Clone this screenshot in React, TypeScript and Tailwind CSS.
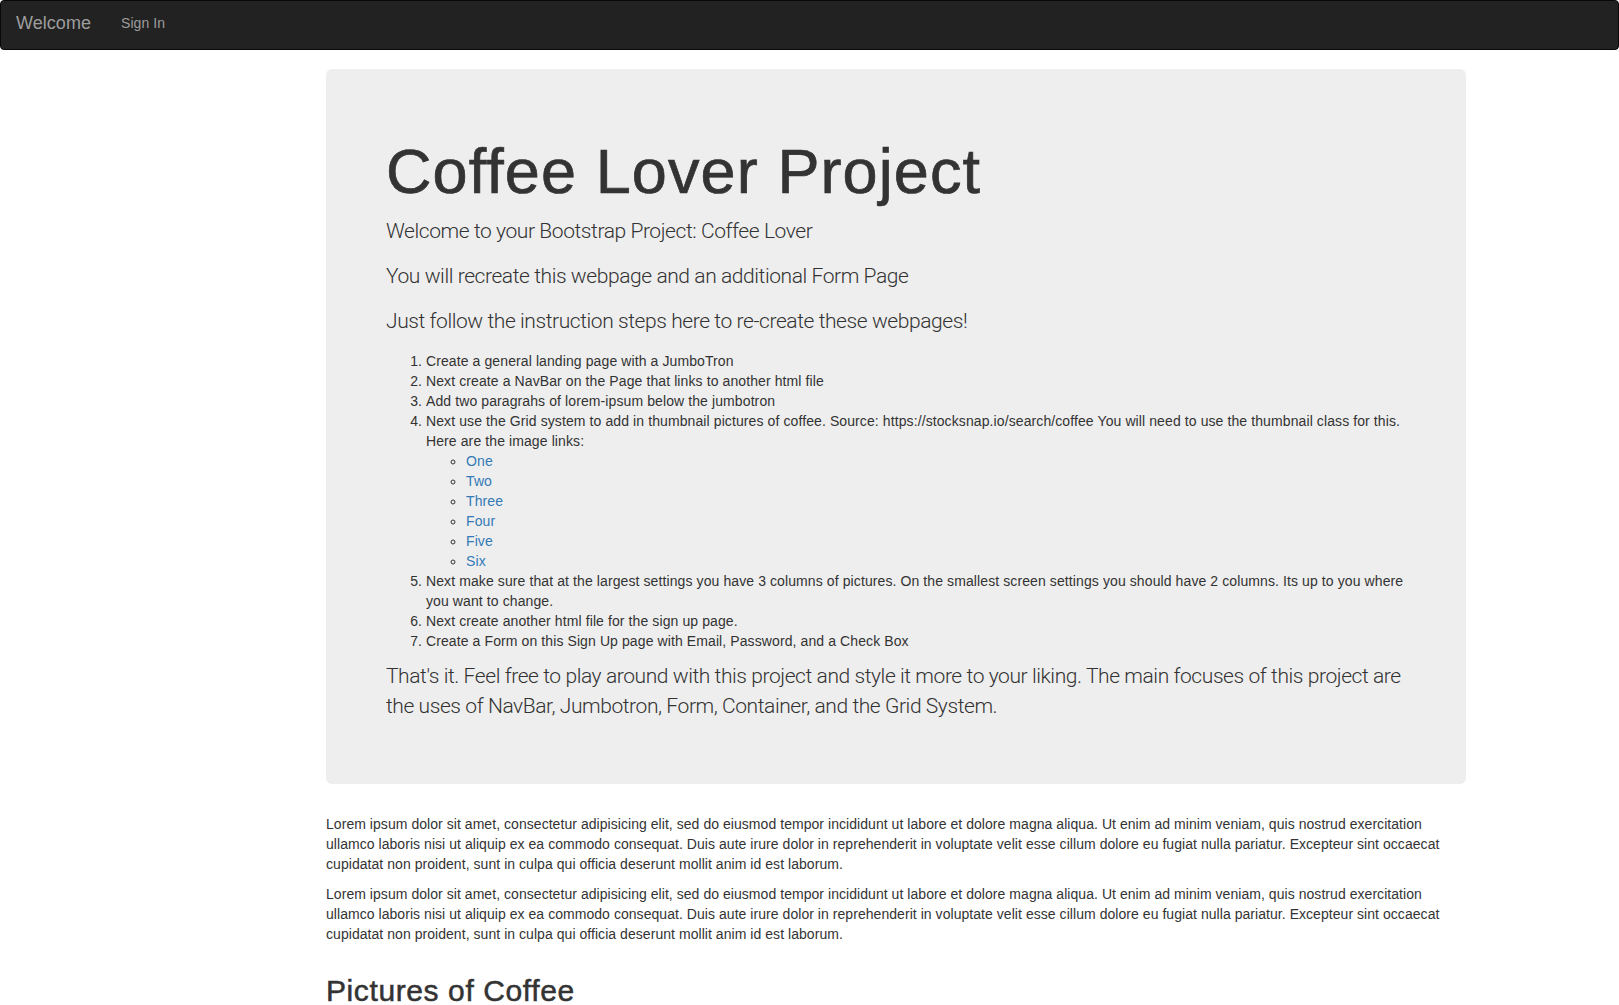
import React from "react";

const lorem =
  "Lorem ipsum dolor sit amet, consectetur adipisicing elit, sed do eiusmod tempor incididunt ut labore et dolore magna aliqua. Ut enim ad minim veniam, quis nostrud exercitation ullamco laboris nisi ut aliquip ex ea commodo consequat. Duis aute irure dolor in reprehenderit in voluptate velit esse cillum dolore eu fugiat nulla pariatur. Excepteur sint occaecat cupidatat non proident, sunt in culpa qui officia deserunt mollit anim id est laborum.";

const lead = "text-[21px] leading-[30px] mb-[15px] font-light tracking-[-0.42px] font-['Roboto',sans-serif]";

export default function App() {
  const links = ["One", "Two", "Three", "Four", "Five", "Six"];
  return (
    <div className="min-h-screen bg-white text-[#333] text-[14px] leading-[20px] tracking-[0.05px] font-['Liberation_Sans',Arial,sans-serif]">
      <nav className="h-[50px] bg-[#222] border border-[#080808] rounded-[4px] flex items-start pt-[12px]">
        <a className="pl-[15px] pr-[15px] text-[18px] leading-[20px] text-[#9d9d9d]">Welcome</a>
        <a className="px-[15px] text-[14px] leading-[20px] text-[#9d9d9d]">Sign In</a>
      </nav>

      <div className="ml-[311px] w-[1170px] px-[15px] mt-[19px]">
        <div className="bg-[#eee] rounded-[6px] px-[60px] pt-[48px] pb-[48px] mb-[30px]">
          <h1 className="mt-[20px] mb-[10px] text-[63px] leading-[1.1] font-normal tracking-[1.1px] [-webkit-text-stroke:0.7px_#333]">
            Coffee Lover Project
          </h1>
          <p className={lead}>Welcome to your Bootstrap Project: Coffee Lover</p>
          <p className={lead}>You will recreate this webpage and an additional Form Page</p>
          <p className={lead}>Just follow the instruction steps here to re-create these webpages!</p>
          <ol className="list-decimal pl-[40px] mb-[10px] tracking-[0.1px]">
            <li>Create a general landing page with a JumboTron</li>
            <li>Next create a NavBar on the Page that links to another html file</li>
            <li>Add two paragrahs of lorem-ipsum below the jumbotron</li>
            <li>
              Next use the Grid system to add in thumbnail pictures of coffee. Source: https://stocksnap.io/search/coffee You will need to use the thumbnail class for this. Here are the image links:
              <ul className="list-[circle] pl-[40px]">
                {links.map((l) => (
                  <li key={l}>
                    <a className="text-[#337ab7]">{l}</a>
                  </li>
                ))}
              </ul>
            </li>
            <li>
              Next make sure that at the largest settings you have 3 columns of pictures. On the smallest screen settings you should have 2 columns. Its up to you where you want to change.
            </li>
            <li>Next create another html file for the sign up page.</li>
            <li>Create a Form on this Sign Up page with Email, Password, and a Check Box</li>
          </ol>
          <p className={lead}>
            That's it. Feel free to play around with this project and style it more to your liking. The main focuses of this project are the uses of NavBar, Jumbotron, Form, Container, and the Grid System.
          </p>
        </div>

        <p className="mb-[10px]">{lorem}</p>
        <p className="mb-[10px]">{lorem}</p>

        <h2 className="mt-[30px] mb-[10px] text-[30px] leading-[1.1] font-normal tracking-[0.6px] [-webkit-text-stroke:0.5px_#333]">
          Pictures of Coffee
        </h2>
      </div>
    </div>
  );
}
